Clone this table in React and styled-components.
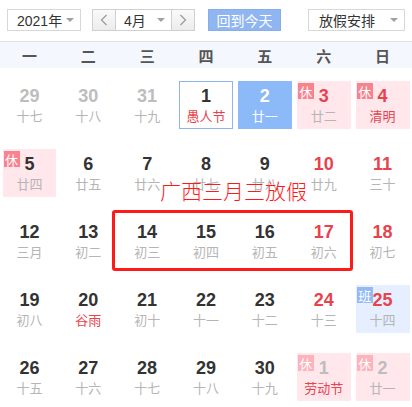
import React from "react";
import styled, { createGlobalStyle } from "styled-components";

const Global = createGlobalStyle`
  html, body { margin: 0; padding: 0; background: #fff; }
  body { font-family: "Liberation Sans", "Noto Sans CJK SC", sans-serif; }
  * { box-sizing: border-box; }
`;

const Page = styled.div`
  position: relative;
  width: 412px;
  height: 407px;
  overflow: hidden;
  background: #fff;
`;

const Toolbar = styled.div`
  display: flex;
  align-items: center;
  height: 41px;
  padding: 9px 0 10px 7px;
`;

const Select = styled.div`
  display: flex;
  align-items: center;
  justify-content: space-between;
  width: ${(p) => p.$w}px;
  height: 22px;
  margin-left: ${(p) => p.$ml || 0}px;
  border: 1px solid #d8d8d8;
  padding: 0 6px 0 ${(p) => p.$pl || 9}px;
  font-family: "Liberation Sans", "Noto Sans CJK SC", sans-serif;
  font-size: 14px;
  color: #333;
  background: #fff;
`;

const Caret = styled.span`
  width: 0;
  height: 0;
  border-left: 4px solid transparent;
  border-right: 4px solid transparent;
  border-top: 4px solid #a0a0a0;
`;

const MonthGroup = styled.div`
  display: flex;
  width: 103px;
  height: 22px;
  margin-left: 11px;
  border: 1px solid #d0d0d0;
`;

const NavBtn = styled.div`
  width: 23px;
  display: flex;
  align-items: center;
  justify-content: center;
  background: linear-gradient(#fafafa, #ececec);
  border-left: ${(p) => (p.$right ? "1px solid #d0d0d0" : "none")};
  border-right: ${(p) => (p.$right ? "none" : "1px solid #d0d0d0")};
`;

const MonthField = styled.div`
  flex: 1;
  display: flex;
  align-items: center;
  justify-content: space-between;
  padding: 0 6px 0 8px;
  font-size: 14px;
  color: #333;
`;

const TodayBtn = styled.div`
  width: 73px;
  height: 22px;
  margin-left: 13px;
  display: flex;
  align-items: center;
  justify-content: center;
  background: #8fb6f0;
  border: 1px solid #86aeea;
  color: #fff;
  font-family: "Noto Sans CJK SC", sans-serif;
  font-size: 14px;
`;

const WeekHeader = styled.div`
  display: grid;
  grid-template-columns: repeat(7, 1fr);
  height: 27px;
  border-top: 1px solid #e0e0e0;
  background: #f4f7fe;
  margin-bottom: 3px;
`;

const WeekDay = styled.div`
  display: flex;
  align-items: center;
  justify-content: center;
  font-family: "Noto Sans CJK SC", sans-serif;
  font-weight: 700;
  font-size: 15px;
  color: #555;
`;

const Grid = styled.div`
  display: grid;
  grid-template-columns: repeat(7, 1fr);
  grid-auto-rows: 68px;
`;

const bgMap = {
  holiday: "#ffe7ec",
  work: "#e5efff",
  selected: "#8cb9f7",
  today: "#fff",
  normal: "transparent",
};

const Cell = styled.div`
  position: relative;
  margin: 10px 2.5px;
  display: flex;
  flex-direction: column;
  align-items: center;
  justify-content: center;
  background: ${(p) => bgMap[p.$kind]};
  border: ${(p) => (p.$kind === "today" ? "1px solid #8cb4ee" : "1px solid transparent")};
`;

const colorMap = {
  dark: "#333",
  red: "#e8434c",
  gray: "#bdbdbd",
  white: "#fff",
};

const Num = styled.div`
  font-family: "Liberation Sans", Arial, sans-serif;
  font-weight: 700;
  font-size: 18px;
  line-height: 20px;
  color: ${(p) => colorMap[p.$c]};
`;

const Lunar = styled.div`
  margin-top: 1px;
  font-family: "Noto Sans CJK SC", sans-serif;
  font-size: 13px;
  line-height: 17px;
  color: ${(p) => (p.$c === "red" ? "#e8434c" : p.$c === "white" ? "#fff" : "#b5b5b5")};
`;

const Badge = styled.span`
  position: absolute;
  top: 1px;
  left: 0;
  width: 16px;
  height: 16px;
  display: flex;
  align-items: center;
  justify-content: center;
  font-family: "Noto Sans CJK SC", sans-serif;
  font-size: 13px;
  line-height: 1;
  color: #fff;
  background: ${(p) => p.$bg};
`;

const Annotation = styled.div`
  position: absolute;
  left: 160px;
  top: 175px;
  font-family: "Noto Sans CJK SC", sans-serif;
  font-weight: 300;
  font-size: 21px;
  line-height: 30px;
  color: #ff1a1a;
  letter-spacing: 0;
`;

const Highlight = styled.div`
  position: absolute;
  left: 112px;
  top: 210px;
  width: 241px;
  height: 61px;
  border: 3px solid #ff1a1a;
  border-radius: 3px;
`;

const Chevron = ({ dir }) => (
  <svg width="8" height="12" viewBox="0 0 8 12">
    <path
      d={dir === "l" ? "M6.5 1 L1.5 6 L6.5 11" : "M1.5 1 L6.5 6 L1.5 11"}
      fill="none"
      stroke="#999"
      strokeWidth="1.2"
    />
  </svg>
);

const weeks = ["一", "二", "三", "四", "五", "六", "日"];

const days = [
  { n: 29, l: "十七", c: "gray" },
  { n: 30, l: "十八", c: "gray" },
  { n: 31, l: "十九", c: "gray" },
  { n: 1, l: "愚人节", c: "dark", lc: "red", k: "today" },
  { n: 2, l: "廿一", c: "white", lc: "white", k: "selected" },
  { n: 3, l: "廿二", c: "red", k: "holiday", b: "休" },
  { n: 4, l: "清明", c: "red", lc: "red", k: "holiday", b: "休" },

  { n: 5, l: "廿四", c: "dark", k: "holiday", b: "休" },
  { n: 6, l: "廿五", c: "dark" },
  { n: 7, l: "廿六", c: "dark" },
  { n: 8, l: "廿七", c: "dark" },
  { n: 9, l: "廿八", c: "dark" },
  { n: 10, l: "廿九", c: "red" },
  { n: 11, l: "三十", c: "red" },

  { n: 12, l: "三月", c: "dark" },
  { n: 13, l: "初二", c: "dark" },
  { n: 14, l: "初三", c: "dark" },
  { n: 15, l: "初四", c: "dark" },
  { n: 16, l: "初五", c: "dark" },
  { n: 17, l: "初六", c: "red" },
  { n: 18, l: "初七", c: "red" },

  { n: 19, l: "初八", c: "dark" },
  { n: 20, l: "谷雨", c: "dark", lc: "red" },
  { n: 21, l: "初十", c: "dark" },
  { n: 22, l: "十一", c: "dark" },
  { n: 23, l: "十二", c: "dark" },
  { n: 24, l: "十三", c: "red" },
  { n: 25, l: "十四", c: "red", k: "work", b: "班" },

  { n: 26, l: "十五", c: "dark" },
  { n: 27, l: "十六", c: "dark" },
  { n: 28, l: "十七", c: "dark" },
  { n: 29, l: "十八", c: "dark" },
  { n: 30, l: "十九", c: "dark" },
  { n: 1, l: "劳动节", c: "gray", lc: "red", k: "holiday", b: "休", faded: true },
  { n: 2, l: "廿一", c: "gray", k: "holiday", b: "休", faded: true },
];

const badgeColor = (d) => {
  if (d.b === "班") return "#94b9f3";
  return d.faded ? "#fcb3bc" : "#f7838f";
};

export default function App() {
  return (
    <Page>
      <Global />
      <Toolbar>
        <Select $w={74}>
          <span>2021年</span>
          <Caret />
        </Select>
        <MonthGroup>
          <NavBtn>
            <Chevron dir="l" />
          </NavBtn>
          <MonthField>
            <span>4月</span>
            <Caret />
          </MonthField>
          <NavBtn $right>
            <Chevron dir="r" />
          </NavBtn>
        </MonthGroup>
        <TodayBtn>回到今天</TodayBtn>
        <Select $w={97} $ml={27} $pl={10}>
          <span>放假安排</span>
          <Caret />
        </Select>
      </Toolbar>
      <WeekHeader>
        {weeks.map((w) => (
          <WeekDay key={w}>{w}</WeekDay>
        ))}
      </WeekHeader>
      <Grid>
        {days.map((d, i) => (
          <Cell key={i} $kind={d.k || "normal"}>
            {d.b && <Badge $bg={badgeColor(d)}>{d.b}</Badge>}
            <Num $c={d.c}>{d.n}</Num>
            <Lunar $c={d.lc}>{d.l}</Lunar>
          </Cell>
        ))}
      </Grid>
      <Highlight />
      <Annotation>广西三月三放假</Annotation>
    </Page>
  );
}
